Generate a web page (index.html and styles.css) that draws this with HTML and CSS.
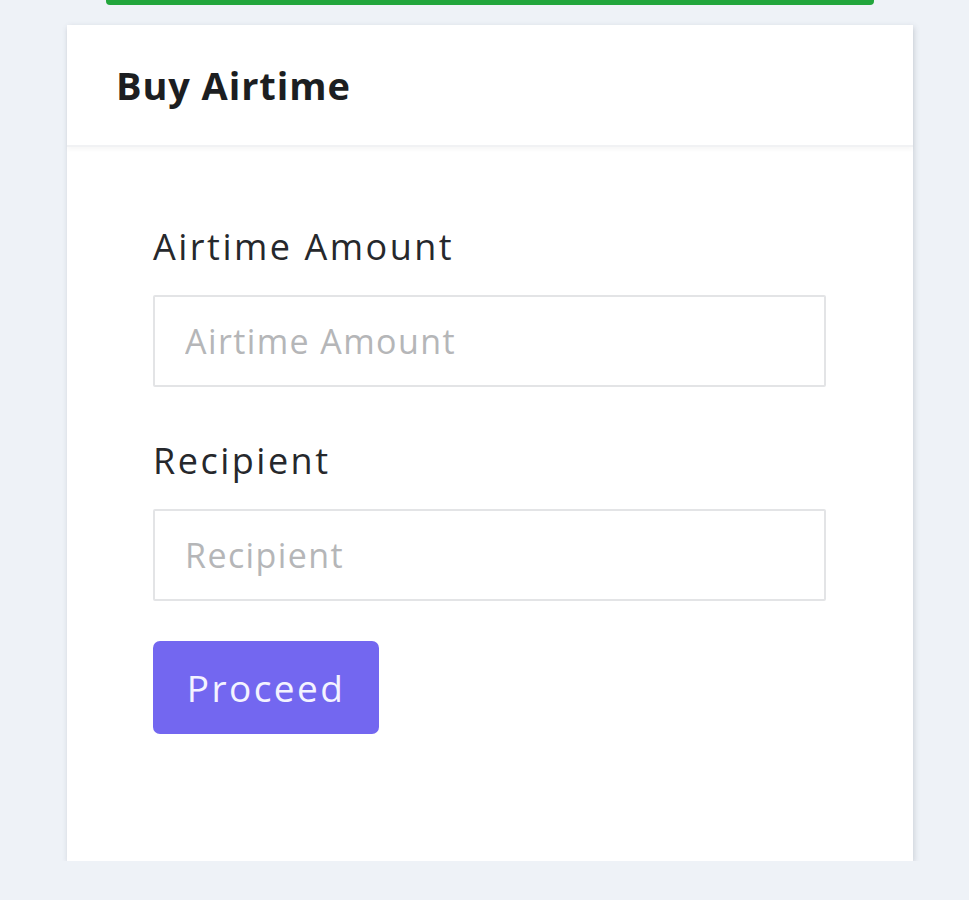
FILE: index.html
```html
<!DOCTYPE html>
<html>
<head>
<meta charset="utf-8">
<link rel="stylesheet" href="styles.css">
</head>
<body>
<div class="page">
  <div class="topbar"></div>
  <div class="card">
    <div class="card-header">
      <h2 class="card-title">Buy Airtime</h2>
    </div>
    <div class="card-body">
      <form class="form">
        <div class="field">
          <label class="label">Airtime Amount</label>
          <input class="input" type="text" placeholder="Airtime Amount">
        </div>
        <div class="field">
          <label class="label">Recipient</label>
          <input class="input" type="text" placeholder="Recipient">
        </div>
        <div class="actions">
          <button class="btn" type="button">Proceed</button>
        </div>
      </form>
    </div>
  </div>
</div>
</body>
</html>
```
FILE: styles.css
```css
html, body {
  margin: 0;
  padding: 0;
  background: #eef2f7;
  font-family: "Open Sans", "Noto Sans", sans-serif;
}
.page {
  display: flex;
  flex-direction: column;
  padding-left: 67px;
}
.topbar {
  margin-left: 39px;
  width: 768px;
  height: 5px;
  background: #22a63c;
  border-radius: 0 0 4px 4px;
}
.card {
  margin-top: 20px;
  width: 846px;
  height: 836px;
  background: #fff;
  box-shadow: 1px 2px 6px rgba(60, 70, 90, 0.2);
  display: flex;
  flex-direction: column;
}
.card-header {
  height: 120px;
  padding-left: 49px;
  display: flex;
  align-items: center;
  border-bottom: 2px solid #f1f2f4;
  box-shadow: 0 3px 4px rgba(0,0,0,0.03);
}
.card-title {
  margin: 0;
  font-size: 38px;
  font-weight: 700;
  color: #1c1e21;
  letter-spacing: 0.9px;
}
.card-body {
  padding: 78px 87px 0 86px;
}
.form {
  display: flex;
  flex-direction: column;
}
.field {
  display: flex;
  flex-direction: column;
  margin-bottom: 40px;
}
.field + .field {
  margin-top: 12px;
}
.label {
  font-size: 36px;
  line-height: 44px;
  color: #26282c;
  letter-spacing: 2.5px;
  margin-bottom: 26px;
}
.input {
  box-sizing: border-box;
  height: 92px;
  border: 2px solid #e3e4e6;
  border-radius: 2px;
  padding: 0 30px;
  font-family: inherit;
  font-size: 34px;
  letter-spacing: 1.4px;
  color: #333;
  outline: none;
}
.input::placeholder {
  color: #b5b6b8;
}
.actions {
  display: flex;
}
.btn {
  width: 226px;
  height: 93px;
  background: #7367f0;
  color: #f4f3ff;
  border: none;
  border-radius: 7px;
  font-family: inherit;
  font-size: 37px;
  letter-spacing: 2.4px;
  padding: 0;
}
```
